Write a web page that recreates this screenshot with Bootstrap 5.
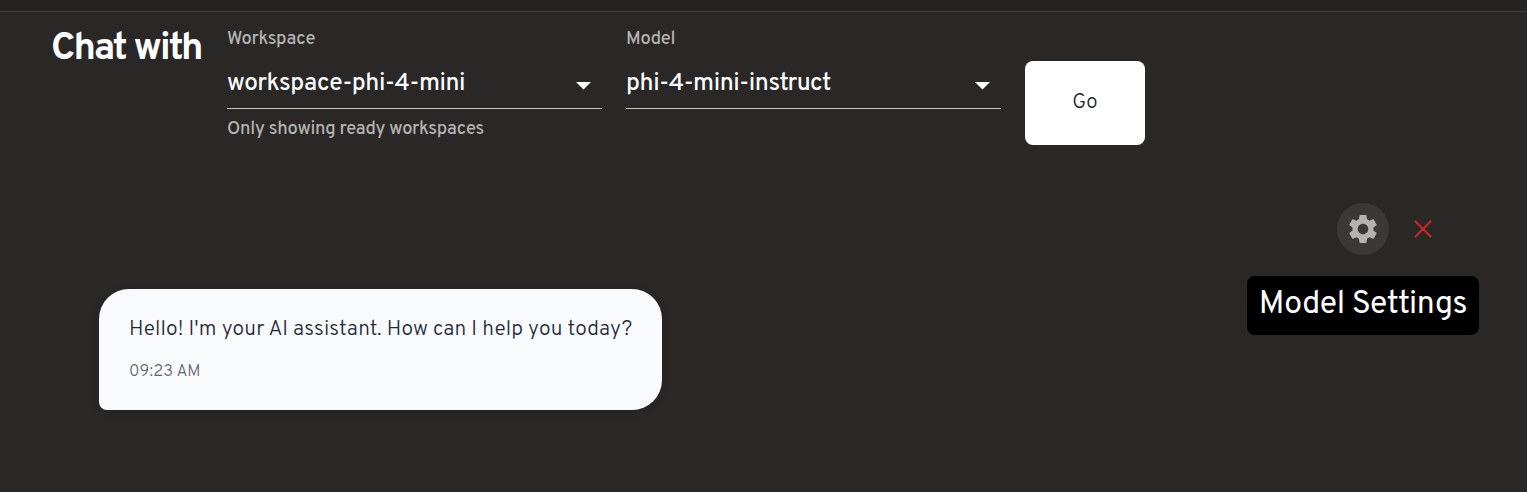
<!DOCTYPE html>
<html lang="en">
<head>
<meta charset="utf-8">
<meta name="viewport" content="width=device-width, initial-scale=1">
<title>Chat</title>
<link href="https://cdn.jsdelivr.net/npm/bootstrap@5.3.0/dist/css/bootstrap.min.css" rel="stylesheet">
<style>
  body { background: #292827; color: #fff; font-family: Overpass, Roboto, sans-serif; height: 492px; overflow: hidden; }
  .topbar { height: 12px; background: #252422; border-bottom: 1px solid #424140; }
  .chat-head { padding: 14px 0 0 51px; height: 178px; gap: 24px; }
  .chat-title { width: 152px; font-size: 38px; line-height: 48px; font-weight: 700; letter-spacing: -1.88px; }
  .field { width: 375px; padding-top: 2px; }
  .field-note { font-size: 18.3px; line-height: 24px; font-weight: 500; letter-spacing: -.27px; color: #b4b3b2; }
  .field-value { height: 57px; padding-top: 16px; border-bottom: 1px solid #c4c3c2; font-size: 24.5px; line-height: 32px; font-weight: 500; letter-spacing: -.41px; color: #fafafa; }
  .field-value svg { margin: 14px 11px 0 0; }
  .field-help { margin-top: 9px; }
  .go-btn, .go-btn:hover { width: 120px; height: 84px; margin-top: 35px; background: #fff; color: #292827; border: 0; border-radius: 8px; font-size: 20.5px; line-height: 24px; font-weight: 300; padding: 0 0 1px; }
  .tools { height: 78px; padding: 13px 78px 0 0; gap: 8px; }
  .tool-btn { width: 52px; height: 52px; border: 0; background: transparent; }
  .tool-btn.active-tool { background: #3a3938; }
  .tip { left: 50%; top: 73px; transform: translateX(-50%); width: 232px; height: 59px; padding-top: 9px; border-radius: 8px; background: #000; color: #fff; font-size: 32px; line-height: 40px; font-weight: 400; letter-spacing: -.35px; }
  .bubble { width: 563px; height: 121px; margin: 21px 0 0 99px; padding: 26px 30px; background: #f8fafc; border-radius: 30px 30px 30px 8px; box-shadow: 0 2px 8px rgba(0,0,0,.12); }
  .msg { font-size: 21px; line-height: 30px; color: #1e293b; font-weight: 300; letter-spacing: .13px; }
  .stamp { font-size: 16.5px; line-height: 24px; color: #5f6675; font-weight: 300; letter-spacing: .13px; margin-top: 15px; }
</style>
</head>
<body>
<header class="topbar"></header>
<main>
  <section class="chat-head d-flex align-items-start">
    <h1 class="chat-title text-nowrap m-0">Chat with</h1>
    <div class="field">
      <div class="field-note">Workspace</div>
      <div class="field-value d-flex justify-content-between align-items-start">
        <span>workspace-phi-4-mini</span>
        <svg width="15" height="8" viewBox="0 0 15 8"><path d="M0 0h15L7.500 7.500z" fill="#fff"/></svg>
      </div>
      <div class="field-note field-help">Only showing ready workspaces</div>
    </div>
    <div class="field">
      <div class="field-note">Model</div>
      <div class="field-value d-flex justify-content-between align-items-start">
        <span>phi-4-mini-instruct</span>
        <svg width="15" height="8" viewBox="0 0 15 8"><path d="M0 0h15L7.500 7.500z" fill="#fff"/></svg>
      </div>
    </div>
    <button class="btn go-btn" type="button">Go</button>
  </section>
  <section class="tools d-flex justify-content-end">
    <div class="position-relative">
      <button class="tool-btn active-tool rounded-circle p-0 d-flex align-items-center justify-content-center" type="button" aria-label="Model Settings">
        <svg width="36" height="36" viewBox="-.3 -.3 24.6 24.6"><path fill="#b3b3b2" d="M19.140 12.940c.04-.3.06-.61.06-.94 0-.32-.02-.64-.07-.94l2.030-1.580c.18-.14.23-.41.12-.61l-1.920-3.320c-.12-.22-.37-.29-.59-.22l-2.390.96c-.5-.38-1.030-.7-1.620-.94l-.36-2.540c-.04-.24-.24-.41-.48-.41h-3.840c-.24 0-.43.17-.47.41l-.36 2.540c-.59.24-1.130.57-1.620.94l-2.390-.96c-.22-.08-.47 0-.59.22L2.740 8.870c-.12.21-.08.47.12.61l2.030 1.580c-.05.3-.09.63-.09.94s.02.64.07.94l-2.030 1.580c-.18.14-.23.41-.12.61l1.920 3.320c.12.22.37.29.59.22l2.390-.96c.5.38 1.030.7 1.620.94l.36 2.540c.05.24.24.41.48.41h3.840c.24 0 .44-.17.47-.41l.36-2.540c.59-.24 1.130-.56 1.620-.94l2.390.96c.22.08.47 0 .59-.22l1.920-3.320c.12-.22.07-.47-.12-.61zM12 15.600c-1.980 0-3.600-1.620-3.600-3.600s1.620-3.600 3.600-3.600 3.600 1.620 3.600 3.600-1.620 3.600-3.600 3.600"/></svg>
      </button>
      <div class="tip position-absolute text-center text-nowrap">Model Settings</div>
    </div>
    <button class="tool-btn p-0 d-flex align-items-center justify-content-center" type="button" aria-label="Close">
      <svg width="20" height="20" viewBox="0 0 20 20"><path d="M2.500 2.500l15 15M17.500 2.500l-15 15" stroke="#cd2626" stroke-width="2.200" stroke-linecap="round"/></svg>
    </button>
  </section>
  <section class="bubble">
    <div class="msg text-nowrap">Hello! I'm your AI assistant. How can I help you today?</div>
    <div class="stamp">09:23 AM</div>
  </section>
</main>
<script src="https://cdn.jsdelivr.net/npm/bootstrap@5.3.0/dist/js/bootstrap.bundle.min.js"></script>
</body>
</html>
